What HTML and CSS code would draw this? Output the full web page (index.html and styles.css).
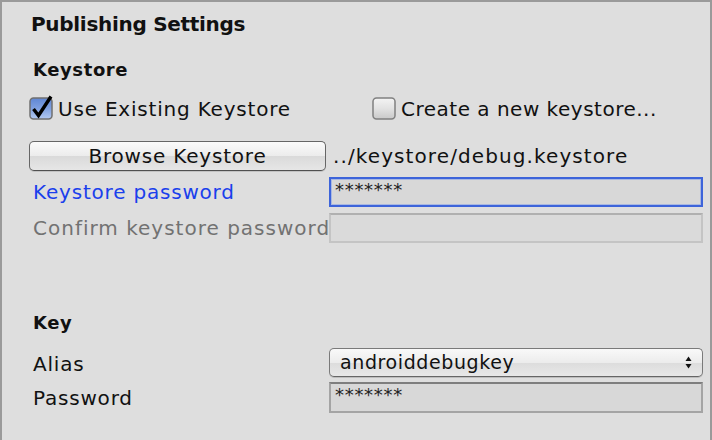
FILE: index.html
```html
<!DOCTYPE html>
<html>
<head>
<meta charset="utf-8">
<link rel="stylesheet" href="styles.css">
</head>
<body>
<div class="panel">
  <div class="row title-row"><h1 class="title">Publishing Settings</h1></div>
  <div class="row heading-row"><h2 class="heading">Keystore</h2></div>
  <div class="row check-row">
    <label class="check">
      <svg class="box" width="26" height="26" viewBox="0 0 26 26">
        <defs>
          <linearGradient id="blue" x1="0" y1="0" x2="0" y2="1">
            <stop offset="0" stop-color="#5f86d4"/>
            <stop offset="0.5" stop-color="#7fa0e0"/>
            <stop offset="1" stop-color="#b3c9f0"/>
          </linearGradient>
        </defs>
        <rect x="1" y="4" width="22" height="21" rx="3.5" fill="url(#blue)" stroke="#707070" stroke-width="1.5"/>
        <path d="M4.5 15 L9.5 21.5 L22 2.5" fill="none" stroke="#000" stroke-width="3.4" stroke-linejoin="miter" stroke-linecap="butt"/>
      </svg>
      <span>Use Existing Keystore</span>
    </label>
    <label class="check">
      <svg class="box" width="26" height="26" viewBox="0 0 26 26">
        <defs>
          <linearGradient id="gray" x1="0" y1="0" x2="0" y2="1">
            <stop offset="0" stop-color="#f4f4f4"/>
            <stop offset="0.5" stop-color="#e2e2e2"/>
            <stop offset="1" stop-color="#c9c9c9"/>
          </linearGradient>
        </defs>
        <rect x="1" y="4" width="22" height="21" rx="3.5" fill="url(#gray)" stroke="#808080" stroke-width="1.5"/>
      </svg>
      <span class="create">Create a new keystore...</span>
    </label>
  </div>
  <div class="row form-row browse-row">
    <button class="button">Browse Keystore</button>
    <div class="path">../keystore/debug.keystore</div>
  </div>
  <div class="row form-row field-row">
    <div class="label label-focus">Keystore password</div>
    <div class="field field-focus">*******</div>
  </div>
  <div class="row form-row field-row">
    <div class="label label-disabled">Confirm keystore password</div>
    <div class="field field-disabled"></div>
  </div>
  <div class="row heading-row key-row"><h2 class="heading">Key</h2></div>
  <div class="row form-row alias-row">
    <div class="label label-low">Alias</div>
    <div class="popup">
      <span>androiddebugkey</span>
      <svg class="arrows" width="7" height="13" viewBox="0 0 7 13">
        <path d="M3.5 0.5 L6.5 5 L0.5 5 Z" fill="#111"/>
        <path d="M0.5 8 L6.5 8 L3.5 12.5 Z" fill="#111"/>
      </svg>
    </div>
  </div>
  <div class="row form-row pass-row">
    <div class="label">Password</div>
    <div class="field">*******</div>
  </div>
</div>
</body>
</html>
```

FILE: styles.css
```css
html, body {
  margin: 0;
  padding: 0;
  background: #dedede;
}

.panel {
  width: 712px;
  height: 440px;
  box-sizing: border-box;
  border: 2px solid #9a9a9a;
  border-bottom: none;
  background: #dedede;
  padding: 0 7px 0 27px;
  display: flex;
  flex-direction: column;
  font-family: "DejaVu Sans", sans-serif;
  color: #111;
  overflow: hidden;
}

.row {
  display: flex;
  align-items: center;
  flex: none;
}

.title-row {
  height: 43px;
}

.title {
  margin: 0;
  padding-left: 2px;
  font-size: 20px;
  font-weight: bold;
  letter-spacing: -0.3px;
  line-height: 24px;
}

.heading-row {
  height: 50px;
}

.heading {
  margin: 0;
  padding-left: 4px;
  font-size: 18px;
  font-weight: bold;
  letter-spacing: 0.6px;
  line-height: 24px;
}

.check-row {
  height: 29px;
  display: grid;
  grid-template-columns: 343px 1fr;
  align-items: center;
}

.check {
  display: flex;
  align-items: center;
  font-size: 20px;
  letter-spacing: 0.8px;
  line-height: 29px;
}

.check .create {
  letter-spacing: 0.5px;
}

.box {
  display: block;
  margin-top: -6px;
  flex: none;
}

.check span {
  margin-left: 3px;
}

.form-row {
  display: grid;
  grid-template-columns: 300px 374px;
  align-items: center;
  font-size: 20px;
  letter-spacing: 0.8px;
}

.browse-row {
  margin-top: 17px;
  height: 30px;
  grid-template-columns: 297px 1fr;
}

.button {
  height: 30px;
  width: 297px;
  box-sizing: border-box;
  border: 1px solid #666;
  border-bottom-color: #505050;
  border-radius: 5px;
  background: linear-gradient(#fbfbfb, #ececec 50%, #dadada 51%, #e6e6e6);
  box-shadow: 0 1px 0 rgba(0,0,0,0.12);
  font-family: "DejaVu Sans", sans-serif;
  font-size: 20px;
  letter-spacing: 0.8px;
  color: #111;
  padding: 0;
  line-height: 28px;
}

.path {
  padding-left: 7px;
  line-height: 30px;
  letter-spacing: 1.1px;
  white-space: nowrap;
}

.field-row {
  margin-top: 6px;
  height: 30px;
}

.label {
  padding-left: 4px;
  line-height: 30px;
  white-space: nowrap;
}

.label-focus {
  color: #1a40ec;
}

.label-disabled {
  color: #727272;
  letter-spacing: 1px;
}

.field {
  height: 30px;
  box-sizing: border-box;
  border: 2px solid #a4a4a4;
  border-top-color: #7e7e7e;
  background: #d8d8d8;
  font-size: 18px;
  letter-spacing: 0.7px;
  line-height: 20px;
  padding: 1px 4px 0;
  color: #222;
}

.field-focus {
  border-color: #3d64da;
  box-shadow: inset 0 0 0 1px #a9b8e2;
}

.field-disabled {
  border-color: #c4c4c4;
  border-top-color: #b0b0b0;
  background: #dadada;
}

.key-row {
  margin-top: 65px;
  height: 30px;
}

.alias-row {
  margin-top: 8px;
  height: 29px;
}

.label-low {
  padding-top: 3px;
}

.popup {
  height: 29px;
  box-sizing: border-box;
  border: 1px solid #7a7a7a;
  border-bottom-color: #666;
  border-radius: 5px;
  background: linear-gradient(#f9f9f9, #ececec 50%, #dcdcdc 51%, #e8e8e8);
  box-shadow: 0 1px 0 rgba(0,0,0,0.15);
  display: flex;
  align-items: center;
  justify-content: space-between;
  padding: 0 10px;
  font-size: 19px;
  letter-spacing: 0.6px;
  line-height: 27px;
}

.arrows {
  display: block;
}

.pass-row {
  margin-top: 7px;
  height: 31px;
}

.pass-row .field {
  height: 31px;
}
```
